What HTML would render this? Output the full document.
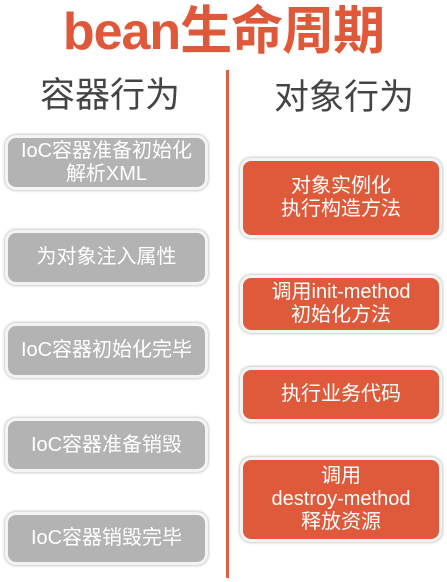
<!DOCTYPE html>
<html><head><meta charset="utf-8"><style>
body{margin:0;width:447px;height:582px;background:#fff;position:relative;overflow:hidden;font-family:"Liberation Sans","Noto Sans CJK SC",sans-serif}
.t{position:absolute;left:0;width:447px;top:2px;text-align:center;font-size:52px;font-weight:bold;color:#e0583a;line-height:60px;letter-spacing:-1px}
.h{position:absolute;font-size:35px;color:#444;line-height:40px}
.line{position:absolute;left:226px;top:70px;width:3px;height:508px;background:#e0603f}
.b{position:absolute;box-sizing:border-box;border:3px solid #f4f4f4;box-shadow:0 0 2px 1px #ccc;border-radius:11px;color:#fff;font-size:20px;line-height:23px;display:flex;align-items:center;justify-content:center;text-align:center}
.g{background:#b3b3b3;left:5px;width:203px}
.o{background:#df5a3a;left:240px;width:202px}
</style></head><body>
<div class="t">bean生命周期</div>
<div class="h" style="left:40px;top:76px">容器行为</div>
<div class="h" style="left:274px;top:78px">对象行为</div>
<div class="line"></div>
<div class="b g" style="top:135px;height:55px">IoC容器准备初始化<br>解析XML</div>
<div class="b g" style="top:230px;height:55px">为对象注入属性</div>
<div class="b g" style="top:323px;height:55px">IoC容器初始化完毕</div>
<div class="b g" style="top:418px;height:54px">IoC容器准备销毁</div>
<div class="b g" style="top:512px;height:53px">IoC容器销毁完毕</div>
<div class="b o" style="top:158px;height:80px">对象实例化<br>执行构造方法</div>
<div class="b o" style="top:275px;height:58px">调用init-method<br>初始化方法</div>
<div class="b o" style="top:367px;height:55px">执行业务代码</div>
<div class="b o" style="top:457px;height:85px">调用<br>destroy-method<br>释放资源</div>
</body></html>
